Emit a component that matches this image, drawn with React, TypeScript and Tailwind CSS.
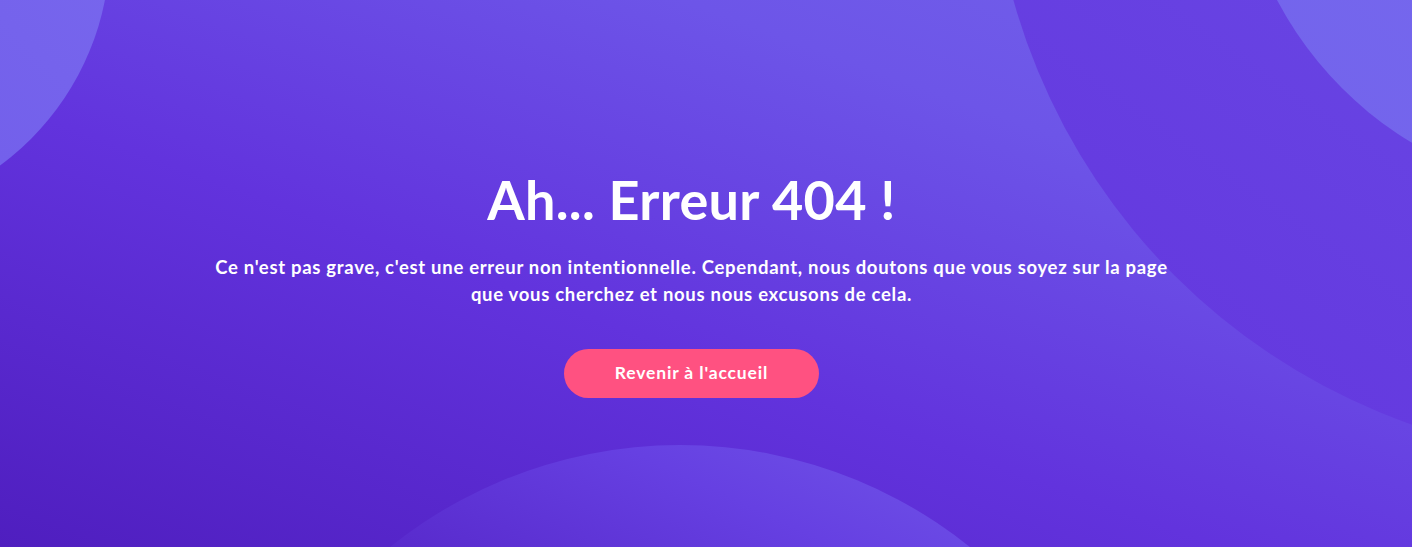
import React from "react";

export default function App() {
  return (
    <div className="relative w-full h-[547px] overflow-hidden bg-[linear-gradient(20deg,#4f1ebf_0%,#6233dd_42%,#6d55e8_75%,#7262ea_100%)] font-['Lato','Liberation_Sans',sans-serif]">
      {/* decorative circles */}
      <div className="absolute left-[-430px] top-[-322px] w-[540px] h-[540px] rounded-full bg-[linear-gradient(225deg,#7b6cef_0%,#7360eb_55%,#6943e3_100%)]" />
      <div className="absolute left-[990px] top-[-800px] w-[1260px] h-[1260px] rounded-full bg-[linear-gradient(215deg,#7565ea_0%,#6a4ae5_55%,#6233dd_100%)]" />
      <div className="absolute left-[1235px] top-[-535px] w-[730px] h-[730px] rounded-full bg-[linear-gradient(225deg,#7a70f0_0%,#7669ee_60%,#7262eb_100%)]" />
      <div className="absolute left-[217px] top-[445px] w-[926px] h-[926px] rounded-full bg-[linear-gradient(205deg,#745fea_0%,#6640e2_18%,#5424c6_38%)]" />

      <div className="relative flex h-full flex-col items-center pr-[29px] pt-[168px] text-center text-white">
        <h1 className="text-[54px] font-bold leading-[64px] tracking-[0.3px]">Ah... Erreur 404 !</h1>
        <p className="mt-[22px] max-w-[968px] text-[18.5px] font-bold leading-[27px] tracking-[0.7px]">
          Ce n'est pas grave, c'est une erreur non intentionnelle. Cependant, nous doutons que vous soyez sur la page que vous cherchez et nous nous excusons de cela.
        </p>
        <button className="mt-[41px] h-[49px] w-[255px] rounded-full bg-[#ff5181] text-[17.5px] font-bold tracking-[0.85px] text-white">
          Revenir à l'accueil
        </button>
      </div>
    </div>
  );
}
